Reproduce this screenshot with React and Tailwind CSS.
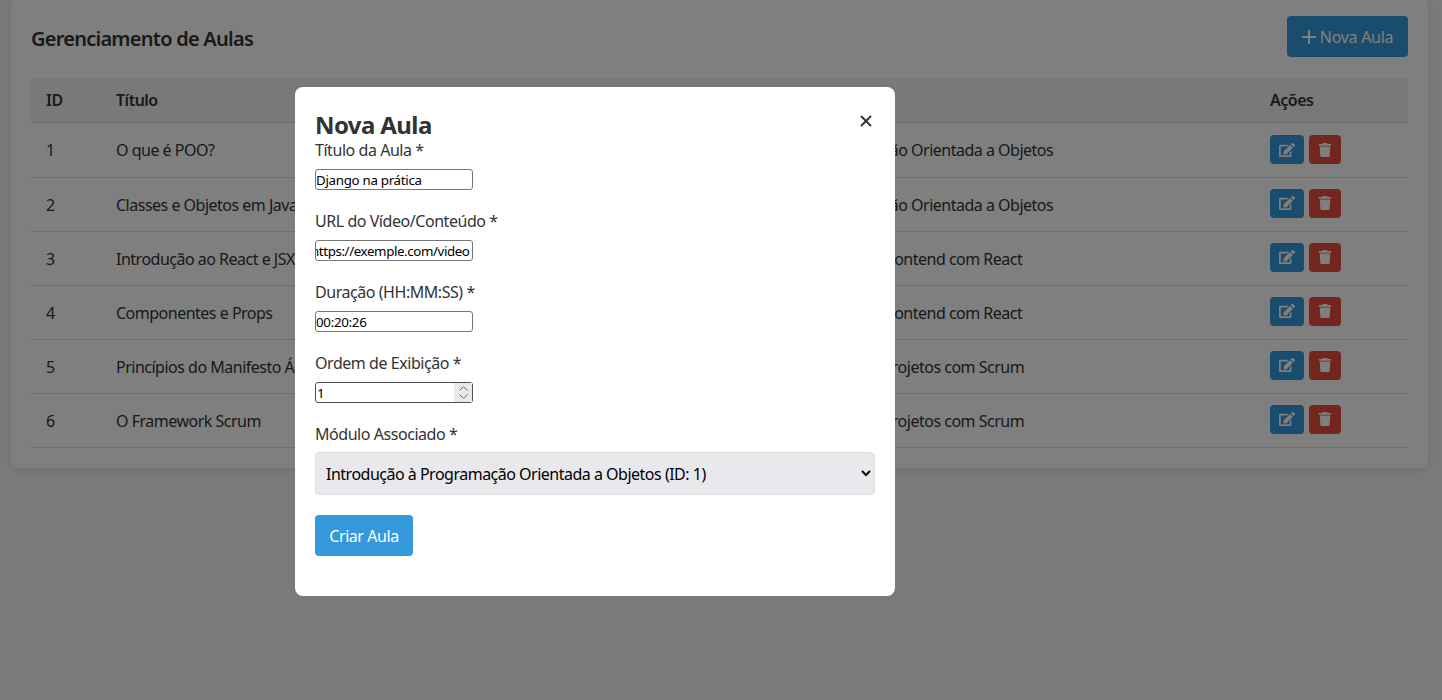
import { FaEdit, FaTrash } from 'react-icons/fa';
import { X } from 'lucide-react';

const aulas = [
  { id: 1, titulo: 'O que é POO?', modulo: 'Introdução à Programação Orientada a Objetos' },
  { id: 2, titulo: 'Classes e Objetos em Java', modulo: 'Introdução à Programação Orientada a Objetos' },
  { id: 3, titulo: 'Introdução ao React e JSX', modulo: 'Desenvolvimento Web Frontend com React' },
  { id: 4, titulo: 'Componentes e Props', modulo: 'Desenvolvimento Web Frontend com React' },
  { id: 5, titulo: 'Princípios do Manifesto Ágil', modulo: 'Gerenciamento Ágil de Projetos com Scrum' },
  { id: 6, titulo: 'O Framework Scrum', modulo: 'Gerenciamento Ágil de Projetos com Scrum' },
];

function Campo({ label, children }) {
  return (
    <div className="mb-[19px]">
      <label className="block h-[24px] mb-[7px] leading-[24px] text-[16px] text-[#333]">{label}</label>
      {children}
    </div>
  );
}

export default function App() {
  return (
    <div className="relative h-[700px] overflow-hidden bg-[#f5f5f5] font-['Noto_Sans',sans-serif] text-[#333]">
      {/* Card */}
      <div className="ml-[11px] mr-[14px] -mt-[3px] rounded-[8px] bg-white px-[20px] pt-[19px] pb-[20px] shadow-[0_2px_10px_rgba(0,0,0,0.1)]">
        <div className="flex items-center justify-between mb-[21px]">
          <h2 className="pt-[4px] text-[20px] font-semibold tracking-[-0.75px]">Gerenciamento de Aulas</h2>
          <button className="flex h-[41px] w-[121px] items-center justify-center gap-[4px] rounded-[4px] bg-[#3498db] text-[16px] text-white tracking-[-0.3px]">
            <svg width="14" height="14" viewBox="0 0 14 14" fill="none" stroke="currentColor" strokeWidth="2">
              <path d="M7 0v14M0 7h14" />
            </svg>
            Nova Aula
          </button>
        </div>

        <table className="w-full table-fixed border-collapse text-[16px] tracking-[-0.5px]">
          <thead>
            <tr className="h-[44px] bg-[#f2f2f2] border-b border-[#ddd] text-left">
              <th className="w-[70px] pl-[15px] font-semibold">ID</th>
              <th className="w-[602px] pl-[15px] font-semibold">Título</th>
              <th className="pl-[15px] font-semibold">Módulo</th>
              <th className="w-[153px] pl-[15px] font-semibold">Ações</th>
            </tr>
          </thead>
          <tbody>
            {aulas.map((a) => {
              const celula = a.id === 1 ? 'pl-[15px] whitespace-nowrap' : 'pl-[15px] pt-[2px] whitespace-nowrap';
              return (
                <tr key={a.id} className={a.id === 1 ? 'h-[55px] border-b border-[#ddd]' : 'h-[54px] border-b border-[#ddd]'}>
                  <td className={celula}>{a.id}</td>
                  <td className={celula}>{a.titulo}</td>
                  <td className={celula}>{a.modulo}</td>
                  <td className={a.id === 1 ? 'pl-[15px]' : 'pl-[15px] pb-[2px]'}>
                    <div className="flex gap-[5px]">
                      <button className="flex h-[29px] w-[34px] items-center justify-center rounded-[4px] bg-[#3498db] text-white">
                        <FaEdit size={16} />
                      </button>
                      <button className="flex h-[29px] w-[32px] items-center justify-center rounded-[4px] bg-[#e74c3c] text-white">
                        <FaTrash size={14} />
                      </button>
                    </div>
                  </td>
                </tr>
              );
            })}
          </tbody>
        </table>
      </div>

      {/* Modal */}
      <div className="absolute inset-0 flex justify-start bg-black/50 pl-[295px] pt-[87px]">
        <div className="relative h-[509px] w-[600px] rounded-[8px] bg-white px-[20px] pt-[25px]">
          <button className="absolute right-[20px] top-[25px] text-[#333]">
            <X size={18} strokeWidth={2.5} />
          </button>
          <h2 className="h-[26px] text-[24px] font-bold leading-[26px] tracking-[-0.6px]">Nova Aula</h2>
          <form className="tracking-[-0.45px]">
            <Campo label="Título da Aula *">
              <input defaultValue="Django na prática" className="block h-[21px] w-[158px] rounded-[3px] border border-[#767676] py-[1px] text-[13.33px] tracking-[-0.3px] text-black" />
            </Campo>
            <Campo label="URL do Vídeo/Conteúdo *">
              <input defaultValue="https://exemple.com/video" className="block h-[21px] w-[158px] rounded-[3px] border border-[#767676] py-[1px] text-[13.33px] tracking-[-0.4px] text-black [text-indent:-5px]" />
            </Campo>
            <Campo label="Duração (HH:MM:SS) *">
              <input defaultValue="00:20:26" className="block h-[21px] w-[158px] rounded-[3px] border border-[#767676] py-[1px] text-[13.33px] tracking-[-0.3px] text-black" />
            </Campo>
            <Campo label="Ordem de Exibição *">
              <div className="relative w-[158px]">
                <input type="number" defaultValue="1" className="block h-[21px] w-[158px] rounded-[3px] border border-[#4f4f4f] pl-[1px] py-[1px] text-[13.33px] text-black [appearance:textfield] [&::-webkit-inner-spin-button]:appearance-none" />
                <span className="absolute right-[1px] top-[1px] flex h-[19px] w-[18px] flex-col items-center justify-center gap-[3px] bg-[#e9e9ed] text-[#6b6b6b]">
                  <svg width="9" height="5" viewBox="0 0 9 5" fill="none" stroke="currentColor" strokeWidth="1">
                    <path d="M0.5 4.5L4.5 0.7L8.5 4.5" />
                  </svg>
                  <svg width="9" height="5" viewBox="0 0 9 5" fill="none" stroke="currentColor" strokeWidth="1">
                    <path d="M0.5 0.5L4.5 4.3L8.5 0.5" />
                  </svg>
                </span>
              </div>
            </Campo>
            <Campo label="Módulo Associado *">
              <select className="-mt-[1px] mb-[20px] block h-[43px] w-[560px] rounded-[4px] border border-[#ddd] bg-[#e9e9ed] px-[6px] text-[16px] tracking-[-0.5px] text-black">
                <option>Introdução à Programação Orientada a Objetos (ID: 1)</option>
              </select>
            </Campo>
            <button type="button" className="h-[41px] w-[98px] rounded-[4px] bg-[#3498db] text-[16px] text-white">
              Criar Aula
            </button>
          </form>
        </div>
      </div>
    </div>
  );
}
